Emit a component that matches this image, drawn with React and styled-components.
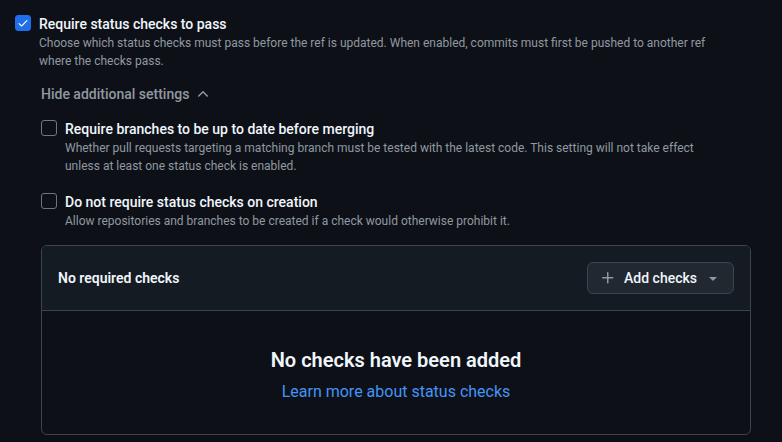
import React from "react";
import styled, { createGlobalStyle } from "styled-components";

const GlobalStyle = createGlobalStyle`
  html, body {
    margin: 0;
    padding: 0;
    background: #0d1117;
  }
  body {
    font-family: Roboto, "Liberation Sans", sans-serif;
    color: #f0f6fc;
    -webkit-font-smoothing: antialiased;
  }
`;

const Page = styled.div`
  padding: 14px 15px 0 15px;
  width: 782px;
  height: 442px;
  box-sizing: border-box;
  overflow: hidden;
`;

const Option = styled.div`
  display: flex;
  gap: 8px;
  align-items: flex-start;
  margin-top: ${(p) => p.$top || 0}px;
`;

const Box = styled.span`
  flex: none;
  width: 16px;
  height: 16px;
  box-sizing: border-box;
  border-radius: 3px;
  margin-top: 1px;
  display: flex;
  align-items: center;
  justify-content: center;
  background: ${(p) => (p.$checked ? "#1f6feb" : "transparent")};
  border: 1px solid ${(p) => (p.$checked ? "#1f6feb" : "#6e7681")};
`;

const Text = styled.div`
  display: flex;
  flex-direction: column;
`;

const Title = styled.div`
  font-size: 14px;
  line-height: 20px;
  font-weight: 500;
  color: #f0f6fc;
`;

const Note = styled.div`
  font-size: 12px;
  line-height: 18px;
  color: #9198a1;
  max-width: ${(p) => p.$max || 720}px;
`;

const Nested = styled.div`
  margin-left: 26px;
`;

const Toggle = styled.button`
  display: flex;
  align-items: center;
  gap: 6px;
  margin-top: 14px;
  padding: 0;
  background: none;
  border: 0;
  font-family: inherit;
  font-size: 14px;
  line-height: 20px;
  font-weight: 500;
  color: #9198a1;
  cursor: pointer;
`;

const Panel = styled.div`
  margin-top: 15px;
  border: 1px solid #3d444d;
  border-radius: 6px;
  width: 710px;
  box-sizing: border-box;
  overflow: hidden;
`;

const PanelHead = styled.div`
  display: flex;
  align-items: center;
  justify-content: space-between;
  padding: 16px;
  background: #151b23;
  border-bottom: 1px solid #3d444d;
`;

const HeadTitle = styled.div`
  font-size: 14px;
  font-weight: 600;
  color: #f0f6fc;
`;

const AddButton = styled.button`
  display: flex;
  align-items: center;
  gap: 8px;
  height: 32px;
  padding: 0 12px;
  box-sizing: border-box;
  background: #212830;
  border: 1px solid #3d444d;
  border-radius: 6px;
  font-family: inherit;
  font-size: 14px;
  font-weight: 500;
  color: #f0f6fc;
  cursor: pointer;
`;

const PanelBody = styled.div`
  display: flex;
  flex-direction: column;
  align-items: center;
  padding: 34px 16px 30px;
`;

const Blank = styled.h3`
  margin: 0;
  font-size: 20px;
  line-height: 30px;
  font-weight: 600;
  color: #f0f6fc;
`;

const Link = styled.a`
  margin-top: 5px;
  font-size: 16px;
  line-height: 24px;
  color: #4493f8;
  text-decoration: none;
`;

const Check = () => (
  <svg width="12" height="12" viewBox="0 0 16 16" fill="#ffffff">
    <path d="M13.78 4.22a.75.75 0 0 1 0 1.06l-7.25 7.25a.75.75 0 0 1-1.06 0L2.22 9.28a.75.75 0 0 1 1.06-1.06L6 10.94l6.72-6.72a.75.75 0 0 1 1.06 0Z" />
  </svg>
);

const Checkbox = ({ checked }) => (
  <Box $checked={checked}>{checked && <Check />}</Box>
);

const ChevronUp = () => (
  <svg width="16" height="16" viewBox="0 0 16 16" fill="#9198a1">
    <path d="M3.22 10.53a.749.749 0 0 1 0-1.06l4.25-4.25a.749.749 0 0 1 1.06 0l4.25 4.25a.749.749 0 1 1-1.06 1.06L8 6.811 4.28 10.53a.749.749 0 0 1-1.06 0Z" />
  </svg>
);

const Plus = () => (
  <svg width="16" height="16" viewBox="0 0 16 16" fill="#9198a1">
    <path d="M7.75 2a.75.75 0 0 1 .75.75V7h4.25a.75.75 0 0 1 0 1.5H8.5v4.25a.75.75 0 0 1-1.5 0V8.5H2.75a.75.75 0 0 1 0-1.5H7V2.75A.75.75 0 0 1 7.75 2Z" />
  </svg>
);

const Caret = () => (
  <svg width="16" height="16" viewBox="0 0 16 16" fill="#9198a1">
    <path d="m4.427 7.427 3.396 3.396a.25.25 0 0 0 .354 0l3.396-3.396A.25.25 0 0 0 11.396 7H4.604a.25.25 0 0 0-.177.427Z" />
  </svg>
);

export default function App() {
  return (
    <>
      <GlobalStyle />
      <Page>
        <Option>
          <Checkbox checked />
          <Text>
            <Title>Require status checks to pass</Title>
            <Note $max={690}>
              Choose which status checks must pass before the ref is updated.
              When enabled, commits must first be pushed to another ref where
              the checks pass.
            </Note>
          </Text>
        </Option>

        <Nested>
          <Toggle>
            Hide additional settings <ChevronUp />
          </Toggle>

          <Option $top={15}>
            <Checkbox />
            <Text>
              <Title>Require branches to be up to date before merging</Title>
              <Note $max={660}>
                Whether pull requests targeting a matching branch must be
                tested with the latest code. This setting will not take effect
                unless at least one status check is enabled.
              </Note>
            </Text>
          </Option>

          <Option $top={17}>
            <Checkbox />
            <Text>
              <Title>Do not require status checks on creation</Title>
              <Note>
                Allow repositories and branches to be created if a check would
                otherwise prohibit it.
              </Note>
            </Text>
          </Option>

          <Panel>
            <PanelHead>
              <HeadTitle>No required checks</HeadTitle>
              <AddButton>
                <Plus />
                Add checks
                <Caret />
              </AddButton>
            </PanelHead>
            <PanelBody>
              <Blank>No checks have been added</Blank>
              <Link href="#">Learn more about status checks</Link>
            </PanelBody>
          </Panel>
        </Nested>
      </Page>
    </>
  );
}
